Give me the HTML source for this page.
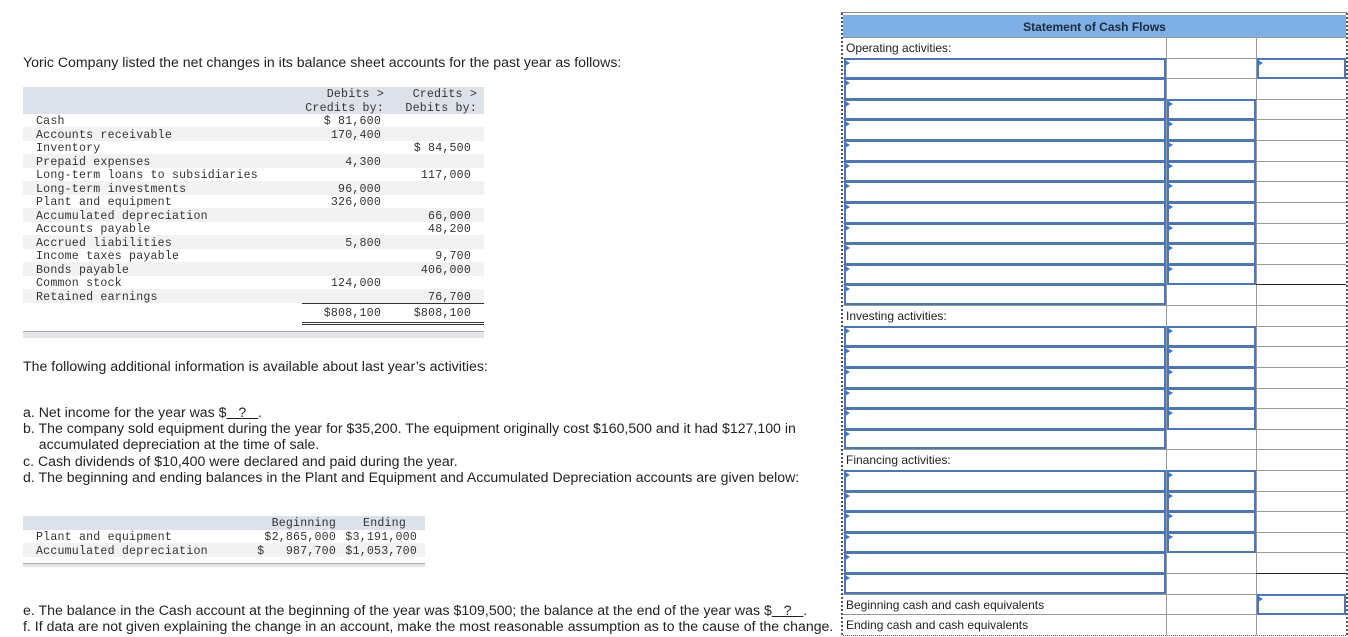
<!DOCTYPE html>
<html><head><meta charset="utf-8"><style>
body{margin:0;width:1348px;height:636px;position:relative;background:#fff;overflow:hidden;font-family:"Liberation Sans",Arial,sans-serif;color:#222}
.a{position:absolute;white-space:nowrap}
.t{font-size:14.1px;letter-spacing:0.02px}
.m{font-family:"Liberation Mono","Courier New",monospace;font-size:11.6px;color:#333;letter-spacing:0.2px}
.h{position:absolute;left:843px;width:503px;height:1px;background:#999}
.v{position:absolute;width:1px;background:#999}
.in{position:absolute;border:2px solid #4f76b0;box-sizing:border-box;background:#fff}
.in:before{content:"";position:absolute;left:-1px;top:0;border-left:5px solid #3a78d0;border-top:3px solid transparent;border-bottom:3px solid transparent}
.lbl{position:absolute;left:846px;font-size:12px;color:#222}
</style></head><body>
<div class="a t" style="left:23px;top:54px">Yoric Company listed the net changes in its balance sheet accounts for the past year as follows:</div>

<div class="a" style="left:23px;top:87px;width:461px;height:27px;background:#dde1ea"></div>
<div class="a" style="left:23px;top:127px;width:461px;height:13.5px;background:#f2f2f2"></div>
<div class="a" style="left:23px;top:154px;width:461px;height:13.5px;background:#f2f2f2"></div>
<div class="a" style="left:23px;top:181px;width:461px;height:13.5px;background:#f2f2f2"></div>
<div class="a" style="left:23px;top:208px;width:461px;height:13.5px;background:#f2f2f2"></div>
<div class="a" style="left:23px;top:235px;width:461px;height:13.5px;background:#f2f2f2"></div>
<div class="a" style="left:23px;top:262px;width:461px;height:13.5px;background:#f2f2f2"></div>
<div class="a" style="left:23px;top:289px;width:461px;height:13.5px;background:#f2f2f2"></div>
<div class="a m" style="left:302px;top:88px;width:82px;text-align:right;line-height:13.5px">Debits &gt;<br>Credits by:</div>
<div class="a m" style="left:395px;top:88px;width:82px;text-align:right;line-height:13.5px">Credits &gt;<br>Debits by:</div>
<div class="a m" style="left:36px;top:115px;line-height:13.5px">Cash<br>Accounts receivable<br>Inventory<br>Prepaid expenses<br>Long-term loans to subsidiaries<br>Long-term investments<br>Plant and equipment<br>Accumulated depreciation<br>Accounts payable<br>Accrued liabilities<br>Income taxes payable<br>Bonds payable<br>Common stock<br>Retained earnings</div>
<div class="a m" style="left:300px;top:115px;width:81px;text-align:right;line-height:13.5px">$ 81,600<br>170,400<br>&nbsp;<br>4,300<br>&nbsp;<br>96,000<br>326,000<br>&nbsp;<br>&nbsp;<br>5,800<br>&nbsp;<br>&nbsp;<br>124,000<br>&nbsp;</div>
<div class="a m" style="left:390px;top:115px;width:81px;text-align:right;line-height:13.5px">&nbsp;<br>&nbsp;<br>$ 84,500<br>&nbsp;<br>117,000<br>&nbsp;<br>&nbsp;<br>66,000<br>48,200<br>&nbsp;<br>9,700<br>406,000<br>&nbsp;<br>76,700</div>
<div class="a" style="left:302px;top:303px;width:182px;height:1px;background:#333"></div>
<div class="a m" style="left:300px;top:307px;width:81px;text-align:right">$808,100</div>
<div class="a m" style="left:390px;top:307px;width:81px;text-align:right">$808,100</div>
<div class="a" style="left:302px;top:322px;width:182px;height:1px;background:#333"></div>
<div class="a" style="left:302px;top:324px;width:182px;height:1px;background:#333"></div>
<div class="a" style="left:23px;top:331px;width:461px;height:6px;background:#e4e6ea;border-top:1px solid #aaa"></div>

<div class="a t" style="left:23px;top:358px">The following additional information is available about last year’s activities:</div>
<div class="a t" style="left:23px;top:404px;line-height:16.2px">a. Net income for the year was $<u>&nbsp;&nbsp;&nbsp;?&nbsp;&nbsp;&nbsp;</u>.<br>b. The company sold equipment during the year for $35,200. The equipment originally cost $160,500 and it had $127,100 in<br>&nbsp;&nbsp;&nbsp;&nbsp;accumulated depreciation at the time of sale.<br>c. Cash dividends of $10,400 were declared and paid during the year.<br>d. The beginning and ending balances in the Plant and Equipment and Accumulated Depreciation accounts are given below:</div>

<div class="a" style="left:23px;top:516px;width:402px;height:14px;background:#dde1ea"></div>
<div class="a" style="left:23px;top:543px;width:402px;height:13.5px;background:#f2f2f2"></div>
<div class="a m" style="left:260px;top:517px;width:76px;text-align:right">Beginning</div>
<div class="a m" style="left:340px;top:517px;width:66px;text-align:right">Ending</div>
<div class="a m" style="left:36px;top:531px;line-height:13.5px">Plant and equipment<br>Accumulated depreciation</div>
<div class="a m" style="left:250px;top:531px;width:86px;text-align:right;line-height:13.5px">$2,865,000<br>$&nbsp;&nbsp;&nbsp;987,700</div>
<div class="a m" style="left:336px;top:531px;width:81px;text-align:right;line-height:13.5px">$3,191,000<br>$1,053,700</div>
<div class="a" style="left:23px;top:563px;width:402px;height:3px;background:#e4e6ea;border-top:1px solid #aaa"></div>

<div class="a t" style="left:23px;top:603px;line-height:15.5px">e. The balance in the Cash account at the beginning of the year was $109,500; the balance at the end of the year was $<u>&nbsp;&nbsp;&nbsp;?&nbsp;&nbsp;&nbsp;</u>.<br>f. If data are not given explaining the change in an account, make the most reasonable assumption as to the cause of the change.</div>

<div class="a" style="left:841px;top:12px;width:506px;height:1px;background:#888"></div>
<div class="a" style="left:841px;top:13px;width:2px;height:622px;border-left:2px dotted #555;box-sizing:border-box"></div>
<div class="a" style="left:1346px;top:13px;width:2px;height:622px;border-left:2px dotted #555;box-sizing:border-box"></div>
<div class="a" style="left:843px;top:635px;width:503px;height:1px;border-top:1px dotted #555"></div>
<div class="a" style="left:843px;top:15px;width:503px;height:22px;background:#7eb0e6;font-weight:bold;font-size:12px;text-align:center;line-height:24px;color:#1a2a3a">Statement of Cash Flows</div>

<div class="v" style="left:1166px;top:37px;height:598px"></div>
<div class="v" style="left:1256px;top:37px;height:598px"></div>
<div class="h" style="top:37px"></div><div class="h" style="top:58px"></div><div class="h" style="top:78px"></div><div class="h" style="top:99px"></div><div class="h" style="top:119px"></div><div class="h" style="top:140px"></div><div class="h" style="top:161px"></div><div class="h" style="top:181px"></div><div class="h" style="top:202px"></div><div class="h" style="top:223px"></div><div class="h" style="top:243px"></div><div class="h" style="top:264px"></div><div class="h" style="top:284px"></div><div class="h" style="top:305px"></div><div class="h" style="top:326px"></div><div class="h" style="top:346px"></div><div class="h" style="top:367px"></div><div class="h" style="top:388px"></div><div class="h" style="top:408px"></div><div class="h" style="top:429px"></div><div class="h" style="top:449px"></div><div class="h" style="top:470px"></div><div class="h" style="top:491px"></div><div class="h" style="top:511px"></div><div class="h" style="top:532px"></div><div class="h" style="top:552px"></div><div class="h" style="top:573px"></div><div class="h" style="top:594px"></div><div class="h" style="top:614px"></div>

<div class="lbl" style="top:41px">Operating activities:</div>
<div class="lbl" style="top:309px">Investing activities:</div>
<div class="lbl" style="top:453px">Financing activities:</div>
<div class="lbl" style="top:598px">Beginning cash and cash equivalents</div>
<div class="lbl" style="top:618px">Ending cash and cash equivalents</div>

<div class="in" style="left:844px;top:58px;width:322px;height:21px"></div>
<div class="in" style="left:844px;top:78px;width:322px;height:22px"></div>
<div class="in" style="left:844px;top:99px;width:322px;height:21px"></div>
<div class="in" style="left:844px;top:119px;width:322px;height:22px"></div>
<div class="in" style="left:844px;top:140px;width:322px;height:22px"></div>
<div class="in" style="left:844px;top:161px;width:322px;height:21px"></div>
<div class="in" style="left:844px;top:181px;width:322px;height:22px"></div>
<div class="in" style="left:844px;top:202px;width:322px;height:22px"></div>
<div class="in" style="left:844px;top:223px;width:322px;height:21px"></div>
<div class="in" style="left:844px;top:243px;width:322px;height:22px"></div>
<div class="in" style="left:844px;top:264px;width:322px;height:21px"></div>
<div class="in" style="left:844px;top:284px;width:322px;height:21px"></div>
<div class="in" style="left:844px;top:326px;width:322px;height:21px"></div>
<div class="in" style="left:844px;top:346px;width:322px;height:22px"></div>
<div class="in" style="left:844px;top:367px;width:322px;height:22px"></div>
<div class="in" style="left:844px;top:388px;width:322px;height:21px"></div>
<div class="in" style="left:844px;top:408px;width:322px;height:22px"></div>
<div class="in" style="left:844px;top:429px;width:322px;height:20px"></div>
<div class="in" style="left:844px;top:470px;width:322px;height:22px"></div>
<div class="in" style="left:844px;top:491px;width:322px;height:21px"></div>
<div class="in" style="left:844px;top:511px;width:322px;height:22px"></div>
<div class="in" style="left:844px;top:532px;width:322px;height:21px"></div>
<div class="in" style="left:844px;top:552px;width:322px;height:22px"></div>
<div class="in" style="left:844px;top:573px;width:322px;height:21px"></div>
<div class="in" style="left:1167px;top:99px;width:89px;height:21px"></div>
<div class="in" style="left:1167px;top:119px;width:89px;height:22px"></div>
<div class="in" style="left:1167px;top:140px;width:89px;height:22px"></div>
<div class="in" style="left:1167px;top:161px;width:89px;height:21px"></div>
<div class="in" style="left:1167px;top:181px;width:89px;height:22px"></div>
<div class="in" style="left:1167px;top:202px;width:89px;height:22px"></div>
<div class="in" style="left:1167px;top:223px;width:89px;height:21px"></div>
<div class="in" style="left:1167px;top:243px;width:89px;height:22px"></div>
<div class="in" style="left:1167px;top:264px;width:89px;height:21px"></div>
<div class="in" style="left:1167px;top:326px;width:89px;height:21px"></div>
<div class="in" style="left:1167px;top:346px;width:89px;height:22px"></div>
<div class="in" style="left:1167px;top:367px;width:89px;height:22px"></div>
<div class="in" style="left:1167px;top:388px;width:89px;height:21px"></div>
<div class="in" style="left:1167px;top:408px;width:89px;height:22px"></div>
<div class="in" style="left:1167px;top:470px;width:89px;height:22px"></div>
<div class="in" style="left:1167px;top:491px;width:89px;height:21px"></div>
<div class="in" style="left:1167px;top:511px;width:89px;height:22px"></div>
<div class="in" style="left:1167px;top:532px;width:89px;height:21px"></div>
<div class="in" style="left:1257px;top:58px;width:89px;height:21px"></div>
<div class="in" style="left:1257px;top:594px;width:89px;height:21px"></div>
<div class="a" style="left:1256px;top:284px;width:90px;height:1px;background:#222"></div>
<div class="a" style="left:1256px;top:573px;width:90px;height:1px;background:#222"></div>
</body></html>
